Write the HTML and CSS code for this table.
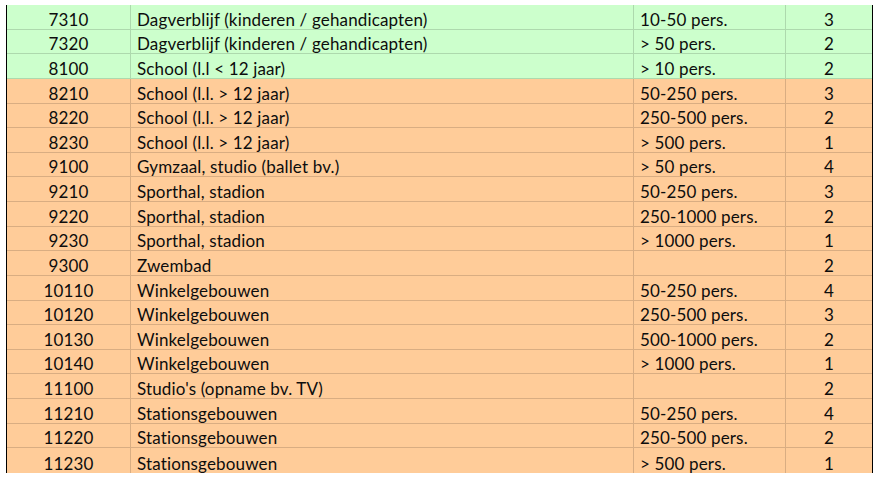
FILE: index.html
```html
<!DOCTYPE html>
<html>
<head>
<meta charset="utf-8">
<link rel="stylesheet" href="styles.css">
</head>
<body>
<div class="sheet">
<table class="grid">
<colgroup><col class="c-code"><col class="c-name"><col class="c-size"><col class="c-cls"></colgroup>
<tbody>
<tr class="green"><td class="code">7310</td><td class="name">Dagverblijf (kinderen / gehandicapten)</td><td class="size">10-50 pers.</td><td class="cls">3</td></tr>
<tr class="green"><td class="code">7320</td><td class="name">Dagverblijf (kinderen / gehandicapten)</td><td class="size">&gt; 50 pers.</td><td class="cls">2</td></tr>
<tr class="green"><td class="code">8100</td><td class="name">School (l.l &lt; 12 jaar)</td><td class="size">&gt; 10 pers.</td><td class="cls">2</td></tr>
<tr class="orange"><td class="code">8210</td><td class="name">School (l.l. &gt; 12 jaar)</td><td class="size">50-250 pers.</td><td class="cls">3</td></tr>
<tr class="orange"><td class="code">8220</td><td class="name">School (l.l. &gt; 12 jaar)</td><td class="size">250-500 pers.</td><td class="cls">2</td></tr>
<tr class="orange"><td class="code">8230</td><td class="name">School (l.l. &gt; 12 jaar)</td><td class="size">&gt; 500 pers.</td><td class="cls">1</td></tr>
<tr class="orange"><td class="code">9100</td><td class="name">Gymzaal, studio (ballet bv.)</td><td class="size">&gt; 50 pers.</td><td class="cls">4</td></tr>
<tr class="orange"><td class="code">9210</td><td class="name">Sporthal, stadion</td><td class="size">50-250 pers.</td><td class="cls">3</td></tr>
<tr class="orange"><td class="code">9220</td><td class="name">Sporthal, stadion</td><td class="size">250-1000 pers.</td><td class="cls">2</td></tr>
<tr class="orange"><td class="code">9230</td><td class="name">Sporthal, stadion</td><td class="size">&gt; 1000 pers.</td><td class="cls">1</td></tr>
<tr class="orange"><td class="code">9300</td><td class="name">Zwembad</td><td class="size"></td><td class="cls">2</td></tr>
<tr class="orange"><td class="code">10110</td><td class="name">Winkelgebouwen</td><td class="size">50-250 pers.</td><td class="cls">4</td></tr>
<tr class="orange"><td class="code">10120</td><td class="name">Winkelgebouwen</td><td class="size">250-500 pers.</td><td class="cls">3</td></tr>
<tr class="orange"><td class="code">10130</td><td class="name">Winkelgebouwen</td><td class="size">500-1000 pers.</td><td class="cls">2</td></tr>
<tr class="orange"><td class="code">10140</td><td class="name">Winkelgebouwen</td><td class="size">&gt; 1000 pers.</td><td class="cls">1</td></tr>
<tr class="orange"><td class="code">11100</td><td class="name">Studio's (opname bv. TV)</td><td class="size"></td><td class="cls">2</td></tr>
<tr class="orange"><td class="code">11210</td><td class="name">Stationsgebouwen</td><td class="size">50-250 pers.</td><td class="cls">4</td></tr>
<tr class="orange"><td class="code">11220</td><td class="name">Stationsgebouwen</td><td class="size">250-500 pers.</td><td class="cls">2</td></tr>
<tr class="orange last"><td class="code">11230</td><td class="name">Stationsgebouwen</td><td class="size">&gt; 500 pers.</td><td class="cls">1</td></tr>
</tbody>
</table>
</div>
</body>
</html>
```
FILE: styles.css
```css
html, body {
  margin: 0;
  padding: 0;
  background: #ffffff;
}
.sheet {
  padding: 5px 0 0 6px;
}
.grid {
  border-collapse: separate;
  border-spacing: 0;
  table-layout: fixed;
  width: 867px;
  border-left: 1px solid #000;
  border-right: 1px solid #000;
  font-family: Lato, "Open Sans", sans-serif;
  font-size: 17px;
  letter-spacing: 0.15px;
  color: #0d0d0d;
}
.c-code { width: 124px; }
.c-name { width: 503px; }
.c-size { width: 152px; }
.c-cls { width: 86px; }
.grid td {
  box-sizing: border-box;
  height: 24.63px;
  padding: 0 4px 0 6px;
  line-height: 18px;
  vertical-align: bottom;
  white-space: nowrap;
  border-right: 1px solid rgba(0, 0, 0, 0.15);
  border-bottom: 1px solid rgba(0, 0, 0, 0.15);
}
.grid td.cls {
  border-right: none;
}
.grid tr.last td {
  border-bottom: none;
}
.green td { background: #ccffcc; }
.orange td { background: #ffcc99; }
.code, .cls {
  text-align: center;
}
.grid td.code, .grid td.cls {
  padding-left: 0;
  padding-right: 0;
}
```
